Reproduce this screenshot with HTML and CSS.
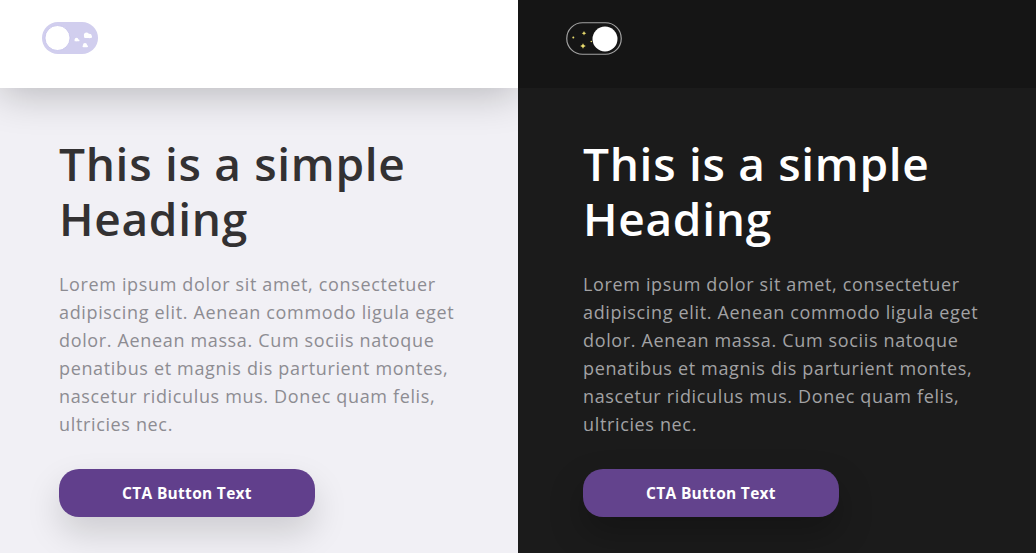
FILE: index.html
```html
<!DOCTYPE html>
<html>
    <head lang="en">
        <meta charset="UTF-8">
        <title>Light / Dark</title>
        <link rel="stylesheet" href="styles.css">
    </head>
    <body>
        <div class="page">
            <section class="panel light">
                <header class="bar">
                    <span class="toggle">
                        <svg width="56" height="32" viewBox="0 0 56 32">
                            <rect x="0" y="0" width="56" height="32" rx="16" fill="#d1ceee"/>
                            <circle cx="15.5" cy="16" r="12.5" fill="#fff" stroke="#c4c0ea" stroke-width="0.8"/>
                            <g fill="#fff">
                                <circle cx="44.5" cy="13" r="2.6"/>
                                <circle cx="47.5" cy="14" r="2.2"/>
                                <rect x="42" y="13.5" width="8" height="2.4" rx="1.2"/>
                                <circle cx="34.5" cy="17.5" r="1.8"/>
                                <rect x="32.5" y="17.5" width="5" height="1.8" rx="0.9"/>
                                <circle cx="43" cy="23" r="2"/>
                                <rect x="40.5" y="23.2" width="5.5" height="2" rx="1"/>
                            </g>
                        </svg>
                    </span>
                </header>
                <main class="hero">
                    <h1>This is a simple Heading</h1>
                    <p>Lorem ipsum dolor sit amet, consectetuer adipiscing elit. Aenean commodo ligula eget dolor. Aenean massa. Cum sociis natoque penatibus et magnis dis parturient montes, nascetur ridiculus mus. Donec quam felis, ultricies nec.</p>
                    <a class="cta" href="#">CTA Button Text</a>
                </main>
            </section>
            <section class="panel dark">
                <header class="bar">
                    <span class="toggle">
                        <svg width="56" height="33" viewBox="0 0 56 33">
                            <rect x="0.75" y="0.75" width="54.5" height="31.5" rx="15.75" fill="#151515" stroke="#a3a3a3" stroke-width="1.2"/>
                            <circle cx="39" cy="17" r="12.5" fill="#fff"/>
                            <g fill="#e9dc6e">
                                <path d="M18 9 L18.7 10.6 L20.3 11.3 L18.7 12 L18 13.6 L17.3 12 L15.7 11.3 L17.3 10.6 Z"/>
                                <path d="M17 21.2 L17.9 23.1 L19.8 24 L17.9 24.9 L17 26.8 L16.1 24.9 L14.2 24 L16.1 23.1 Z"/>
                                <circle cx="7.3" cy="15.5" r="1"/>
                                <circle cx="25.3" cy="19.5" r="0.8"/>
                            </g>
                        </svg>
                    </span>
                </header>
                <main class="hero">
                    <h1>This is a simple Heading</h1>
                    <p>Lorem ipsum dolor sit amet, consectetuer adipiscing elit. Aenean commodo ligula eget dolor. Aenean massa. Cum sociis natoque penatibus et magnis dis parturient montes, nascetur ridiculus mus. Donec quam felis, ultricies nec.</p>
                    <a class="cta" href="#">CTA Button Text</a>
                </main>
            </section>
        </div>
    </body>
</html>
```

FILE: styles.css
```css
*{
    margin:0;
    padding:0;
    box-sizing:border-box;
}
body{
    font-family:"Open Sans","Noto Sans",sans-serif;
    overflow:hidden;
}
.page{
    display:grid;
    grid-template-columns:518px 518px;
    height:553px;
}
.panel{
    display:flex;
    flex-direction:column;
    overflow:hidden;
}
.bar{
    height:88px;
    padding:22px 0 0 42px;
    position:relative;
    z-index:2;
}
.toggle{
    display:block;
    width:56px;
    height:33px;
    cursor:pointer;
}
.toggle svg{
    display:block;
}
.hero{
    flex:1;
    padding:48px 0 0 59px;
}
.hero h1{
    font-size:46px;
    line-height:55px;
    font-weight:600;
    width:400px;
    letter-spacing:0.7px;
}
.hero p{
    margin-top:24px;
    width:412px;
    font-size:18px;
    line-height:28px;
    letter-spacing:0.65px;
}
.cta{
    display:flex;
    align-items:center;
    justify-content:center;
    width:256px;
    height:48px;
    margin-top:31px;
    border-radius:20px;
    background-color:#613f8c;
    color:#fff;
    font-size:15.5px;
    font-weight:700;
    letter-spacing:0.3px;
    text-decoration:none;
}

/* light */
.light{
    background-color:#f1f0f5;
}
.light .bar{
    background-color:#fff;
    box-shadow:0 6px 40px rgba(0,0,0,0.24);
}
.light h1{
    color:#333132;
}
.light p{
    color:#8d8c92;
}
.light .cta{
    box-shadow:0 16px 34px rgba(0,0,0,0.15);
}

/* dark */
.dark{
    background-color:#1b1b1b;
}
.dark .bar{
    background-color:#151515;
    padding-left:48px;
}
.dark .hero{
    padding-left:65px;
}
.dark h1{
    color:#fff;
}
.dark p{
    color:#a2a2a4;
}
.dark .cta{
    background-color:#63438d;
    box-shadow:0 16px 34px rgba(0,0,0,0.25);
}
```
